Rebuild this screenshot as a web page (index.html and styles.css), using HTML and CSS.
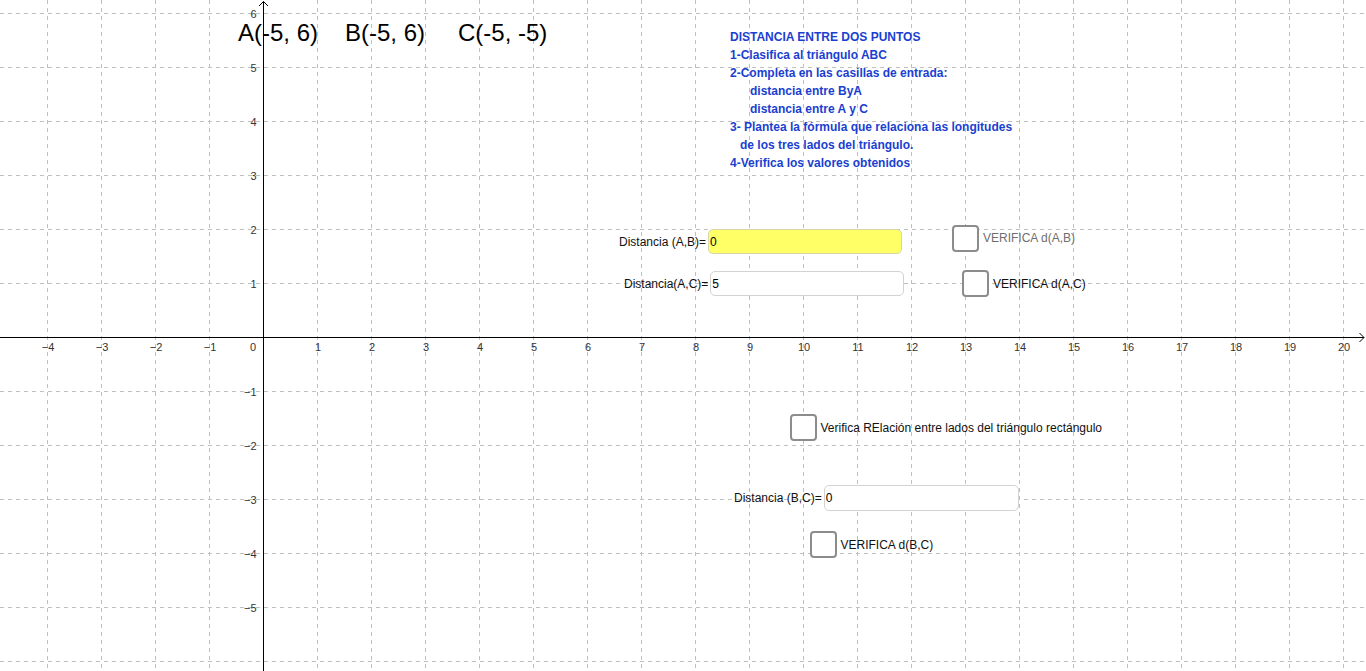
FILE: index.html
```html
<!DOCTYPE html>
<html lang="es">
<head>
<meta charset="utf-8">
<title>Distancia entre dos puntos</title>
<link rel="stylesheet" href="styles.css">
</head>
<body>
<div class="canvas">
  <svg class="graph" width="1366" height="671" viewBox="0 0 1366 671" xmlns="http://www.w3.org/2000/svg">
    <path class="grid" d="M47.5 0V671M101.5 0V671M155.5 0V671M209.5 0V671M317.5 0V671M371.5 0V671M425.5 0V671M479.5 0V671M533.5 0V671M587.5 0V671M641.5 0V671M695.5 0V671M749.5 0V671M803.5 0V671M857.5 0V671M911.5 0V671M965.5 0V671M1019.5 0V671M1073.5 0V671M1127.5 0V671M1181.5 0V671M1235.5 0V671M1289.5 0V671M1343.5 0V671M0 13.5H1366M0 67.5H1366M0 121.5H1366M0 175.5H1366M0 229.5H1366M0 283.5H1366M0 391.5H1366M0 445.5H1366M0 499.5H1366M0 553.5H1366M0 607.5H1366M0 661.5H1366"/>
    <path class="axis" d="M0 337.5H1364M1359.5 333L1364 337.5L1359.5 342M263.5 671V1.5M259 6L263.5 1.5L268 6"/>
    <g class="xlabels">
      <text x="48" y="351">−4</text>
      <text x="102" y="351">−3</text>
      <text x="156" y="351">−2</text>
      <text x="210" y="351">−1</text>
      <text x="253" y="351">0</text>
      <text x="318" y="351">1</text>
      <text x="372" y="351">2</text>
      <text x="426" y="351">3</text>
      <text x="480" y="351">4</text>
      <text x="534" y="351">5</text>
      <text x="588" y="351">6</text>
      <text x="642" y="351">7</text>
      <text x="696" y="351">8</text>
      <text x="750" y="351">9</text>
      <text x="804" y="351">10</text>
      <text x="858" y="351">11</text>
      <text x="912" y="351">12</text>
      <text x="966" y="351">13</text>
      <text x="1020" y="351">14</text>
      <text x="1074" y="351">15</text>
      <text x="1128" y="351">16</text>
      <text x="1182" y="351">17</text>
      <text x="1236" y="351">18</text>
      <text x="1290" y="351">19</text>
      <text x="1344" y="351">20</text>
    </g>
    <g class="ylabels">
      <text x="256.5" y="17.5">6</text>
      <text x="256.5" y="71.5">5</text>
      <text x="256.5" y="125.5">4</text>
      <text x="256.5" y="179.5">3</text>
      <text x="256.5" y="233.5">2</text>
      <text x="256.5" y="287.5">1</text>
      <text x="256.5" y="395.5">−1</text>
      <text x="256.5" y="449.5">−2</text>
      <text x="256.5" y="503.5">−3</text>
      <text x="256.5" y="557.5">−4</text>
      <text x="256.5" y="611.5">−5</text>
    </g>
    <g class="points">
      <text x="238" y="41">A(-5, 6)</text>
      <text x="345" y="41">B(-5, 6)</text>
      <text x="458" y="41">C(-5, -5)</text>
    </g>
  </svg>

  <div class="instructions">
    <div>DISTANCIA ENTRE DOS PUNTOS</div>
    <div>1-Clasifica al triángulo ABC</div>
    <div>2-Completa en las casillas de entrada:</div>
    <div class="indent2">distancia entre ByA</div>
    <div class="indent2">distancia entre A y C</div>
    <div>3- Plantea la fórmula que relaciona las longitudes</div>
    <div class="indent1">de los tres lados del triángulo.</div>
    <div>4-Verifica los valores obtenidos</div>
  </div>

  <label class="field field-ab">
    <span class="field-label">Distancia (A,B)=</span>
    <input class="field-input field-yellow" type="text" value="0">
  </label>
  <label class="field field-ac">
    <span class="field-label">Distancia(A,C)=</span>
    <input class="field-input" type="text" value="5">
  </label>
  <label class="field field-bc">
    <span class="field-label">Distancia (B,C)=</span>
    <input class="field-input field-wide" type="text" value="0">
  </label>

  <label class="check check-ab">
    <input class="box" type="checkbox">
    <span class="check-label muted">VERIFICA d(A,B)</span>
  </label>
  <label class="check check-ac">
    <input class="box" type="checkbox">
    <span class="check-label">VERIFICA d(A,C)</span>
  </label>
  <label class="check check-rel">
    <input class="box" type="checkbox">
    <span class="check-label">Verifica RElación entre lados del triángulo rectángulo</span>
  </label>
  <label class="check check-bc">
    <input class="box" type="checkbox">
    <span class="check-label">VERIFICA d(B,C)</span>
  </label>
</div>
</body>
</html>
```

FILE: styles.css
```css
html, body {
  margin: 0;
  padding: 0;
  background: #ffffff;
  overflow: hidden;
}

.canvas {
  position: relative;
  width: 1366px;
  height: 671px;
  font-family: "Liberation Sans", Arial, sans-serif;
  color: #000;
}

.graph {
  position: absolute;
  left: 0;
  top: 0;
  display: block;
}

.grid {
  fill: none;
  stroke: #c0c0c0;
  stroke-width: 1;
  stroke-dasharray: 4 4;
}

.axis {
  fill: none;
  stroke: #000;
  stroke-width: 1;
}

.xlabels text,
.ylabels text {
  font-family: "Liberation Sans", Arial, sans-serif;
  font-size: 11px;
  fill: #333;
}

.xlabels text {
  text-anchor: middle;
}

.ylabels text {
  text-anchor: end;
}

.points text {
  font-family: "Liberation Sans", Arial, sans-serif;
  font-size: 24px;
  fill: #000;
}

.instructions {
  position: absolute;
  left: 730px;
  top: 27.5px;
  font-size: 12px;
  font-weight: bold;
  line-height: 18px;
  color: #1a3fd0;
  white-space: nowrap;
}

.indent1 { padding-left: 10px; }
.indent2 { padding-left: 20px; }

/* input boxes */
.field {
  position: absolute;
  display: flex;
  align-items: center;
  gap: 2px;
}

.field-ab { left: 619px; top: 229px; }
.field-ac { left: 624px; top: 271px; }
.field-bc { left: 734px; top: 484.5px; }

.field-label {
  font-size: 12px;
  color: #111;
  white-space: nowrap;
}

.field-input {
  box-sizing: border-box;
  width: 194px;
  height: 25px;
  margin: 0;
  padding: 0 1px;
  border: 1px solid #d2d2d2;
  border-radius: 5px;
  background: #fff;
  font-family: "Liberation Sans", Arial, sans-serif;
  font-size: 12px;
  color: #000;
  outline: none;
}

.field-yellow {
  background: #ffff66;
  border-color: #d6d6a8;
}

.field-wide {
  width: 195px;
  height: 26px;
}

/* checkboxes */
.check {
  position: absolute;
  display: flex;
  align-items: center;
  gap: 4px;
}

.check-ab { left: 952px; top: 224.5px; }
.check-ac { left: 962px; top: 270px; }
.check-rel { left: 789.5px; top: 414px; }
.check-bc { left: 809.5px; top: 531px; }

.box {
  appearance: none;
  -webkit-appearance: none;
  box-sizing: border-box;
  width: 27px;
  height: 27px;
  margin: 0;
  border: 2px solid #8c8c8c;
  border-radius: 4px;
  background: #fff;
}

.check-label {
  font-size: 12px;
  color: #111;
  white-space: nowrap;
}

.check-label.muted {
  color: #6f6f6f;
}
```
